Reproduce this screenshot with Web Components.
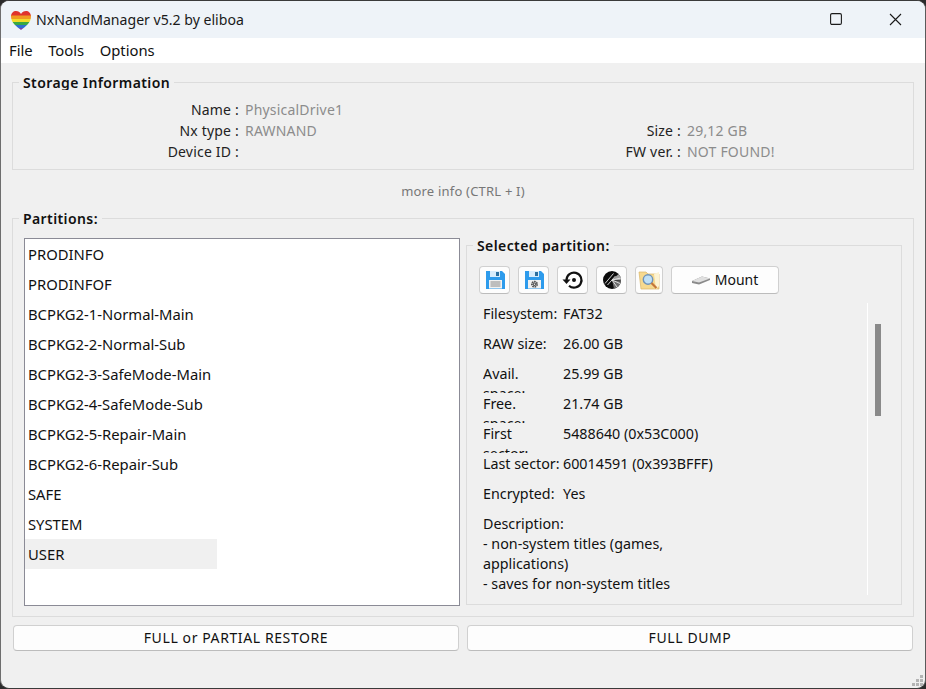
<!DOCTYPE html>
<html>
<head>
<meta charset="utf-8">
<style>
html, body { margin: 0; height: 100%; background: #2b2b2b; overflow: hidden; }
</style>
</head>
<body>
<nx-window></nx-window>

<script>
const FONT = `"Noto Sans", "Open Sans", sans-serif`;

class NxTitlebar extends HTMLElement {
    constructor() {
        super();
        this.attachShadow({ mode: "open" });
        this.shadowRoot.innerHTML = `
<style>
:host { display: flex; height: 37px; background: #eef3f8; align-items: center; color: #1a1a1a; }
.logo { margin-left: 9px; width: 22px; height: 22px; display: block; }
.title { margin-left: 4px; font: 14.1px/20px ${FONT}; }
.btns { margin-left: auto; display: flex; }
.btn { width: 59px; height: 37px; display: flex; align-items: center; justify-content: center; }
</style>
<svg class="logo" viewBox="0 0 22 22">
  <defs><clipPath id="h"><path d="M11 21C7 18 1 14 1 7.500 1 4 3.500 2 6 2c2.200 0 4 1 5 3 1-2 2.800-3 5-3 2.500 0 5 2 5 5.500C21 14 15 18 11 21z"/></clipPath></defs>
  <g clip-path="url(#h)">
    <rect width="22" height="6" y="1" fill="#e0342c"/>
    <rect width="22" height="3.500" y="6.500" fill="#f09a22"/>
    <rect width="22" height="3" y="10" fill="#f2dc2a"/>
    <rect width="22" height="3" y="13" fill="#3aa845"/>
    <rect width="22" height="3" y="16" fill="#2f6fd0"/>
    <rect width="22" height="6" y="19" fill="#7d3fa8"/>
  </g>
</svg>
<span class="title">NxNandManager v5.2 by eliboa</span>
<div class="btns">
  <div class="btn"><svg width="13" height="13" viewBox="0 0 13 13"><rect x="0.600" y="0.600" width="10.800" height="10.800" rx="1.400" fill="none" stroke="#1a1a1a" stroke-width="1.100"/></svg></div>
  <div class="btn"><svg width="13" height="13" viewBox="0 0 13 13"><path d="M1 1l11 11M12 1L1 12" stroke="#1a1a1a" stroke-width="1.100" fill="none"/></svg></div>
</div>`;
    }
}
customElements.define("nx-titlebar", NxTitlebar);

class NxMenubar extends HTMLElement {
    constructor() {
        super();
        this.attachShadow({ mode: "open" });
        this.shadowRoot.innerHTML = `
<style>
:host { display: flex; height: 25px; box-sizing: border-box; padding: 0 0 2px 8px; background: #fff; align-items: center; gap: 15.5px; font: 14.800px/20px ${FONT}; color: #111; }
</style>
<span>File</span><span>Tools</span><span>Options</span>`;
    }
}
customElements.define("nx-menubar", NxMenubar);

class NxGroup extends HTMLElement {
    constructor() {
        super();
        this.attachShadow({ mode: "open" });
        this.shadowRoot.innerHTML = `
<style>
:host { display: block; border: 1px solid #dcdcdc; position: relative; box-sizing: border-box; }
.legend { position: absolute; left: 6px; top: -10px; background: #f0f0f0; padding: 0 4px; height: 17px; overflow: hidden;
  font: 600 14px/20px "Noto Sans", sans-serif; letter-spacing: 0.400px; color: #111; white-space: nowrap; }
</style>
<div class="legend"></div>
<slot></slot>`;
    }
    connectedCallback() {
        this.shadowRoot.querySelector(".legend").textContent = this.getAttribute("label");
    }
}
customElements.define("nx-group", NxGroup);

class NxStorageInfo extends HTMLElement {
    constructor() {
        super();
        this.attachShadow({ mode: "open" });
        this.shadowRoot.innerHTML = `
<style>
:host { display: grid; grid-template-columns: 226px 216px 226px 1fr; grid-auto-rows: 21px; padding-top: 16px; font: 14px/21px "Noto Sans", sans-serif; color: #222; white-space: nowrap; }
.k { text-align: right; letter-spacing: 0.200px; }
.v { padding-left: 6px; color: #8c8c8c; letter-spacing: 0.200px; }
</style>
<div class="k">Name :</div><div class="v" style="grid-column: 2 / 5">PhysicalDrive1</div>
<div class="k">Nx type :</div><div class="v">RAWNAND</div><div class="k">Size :</div><div class="v">29,12 GB</div>
<div class="k">Device ID :</div><div class="v"></div><div class="k">FW ver. :</div><div class="v">NOT FOUND!</div>`;
    }
}
customElements.define("nx-storage-info", NxStorageInfo);

class NxPartitionList extends HTMLElement {
    constructor() {
        super();
        this.attachShadow({ mode: "open" });
        this.shadowRoot.innerHTML = `
<style>
:host { display: block; width: 436px; height: 368px; box-sizing: border-box; border: 1px solid #8b8b96; background: #fff; font: 14.800px/30px ${FONT}; color: #111; flex: none; }
div { height: 30px; padding-left: 3px; width: 189px; white-space: nowrap; }
.sel { background: #f0f0f0; }
</style>
<div>PRODINFO</div>
<div>PRODINFOF</div>
<div>BCPKG2-1-Normal-Main</div>
<div>BCPKG2-2-Normal-Sub</div>
<div>BCPKG2-3-SafeMode-Main</div>
<div>BCPKG2-4-SafeMode-Sub</div>
<div>BCPKG2-5-Repair-Main</div>
<div>BCPKG2-6-Repair-Sub</div>
<div>SAFE</div>
<div>SYSTEM</div>
<div class="sel">USER</div>`;
    }
}
customElements.define("nx-partition-list", NxPartitionList);

class NxToolButton extends HTMLElement {
    constructor() {
        super();
        this.attachShadow({ mode: "open" });
        this.shadowRoot.innerHTML = `
<style>
:host { display: flex; align-items: center; justify-content: center; box-sizing: border-box; height: 28px; background: #fdfdfd; border: 1px solid #d0d0d0; border-bottom-color: #bcbcbc; border-radius: 4px; font: 14px/20px ${FONT}; color: #111; gap: 5px; flex: none; }
</style>
<slot></slot>`;
    }
}
customElements.define("nx-tool-button", NxToolButton);

class NxInfoRow extends HTMLElement {
    constructor() {
        super();
        this.attachShadow({ mode: "open" });
        this.shadowRoot.innerHTML = `
<style>
:host { display: flex; height: 30px; font: 14.300px/20px ${FONT}; color: #111; }
.k { width: 80px; height: 29px; overflow: hidden; flex: none; white-space: pre-line; }
</style>
<div class="k"></div><div><slot></slot></div>`;
    }
    connectedCallback() {
        this.shadowRoot.querySelector(".k").textContent = this.getAttribute("label");
    }
}
customElements.define("nx-info-row", NxInfoRow);

class NxSelectedPartition extends HTMLElement {
    constructor() {
        super();
        this.attachShadow({ mode: "open" });
        this.shadowRoot.innerHTML = `
<style>
:host { display: block; position: relative; height: 100%; }
.tools { display: flex; gap: 8px; padding: 20px 0 0 12px; }
.info { padding: 10px 0 0 16px; }
.desc { width: 225px; font: 14.300px/20px ${FONT}; color: #111; }
.track { position: absolute; left: 400px; top: 57px; bottom: 9px; width: 1px; background: #fff; }
.thumb { position: absolute; left: 408px; top: 78px; width: 6px; height: 92px; background: #8a8a8a; }
svg { display: block; }
</style>
<div class="tools">
  <nx-tool-button style="width:31px">
    <svg width="22" height="22" viewBox="0 0 22 22"><path d="M2 2h16l3 3v15H2z" fill="#2d9bec"/><rect x="6" y="2" width="10" height="6" fill="#d7ecfb"/><rect x="12" y="3" width="3" height="4" fill="#2b6f9f"/><rect x="5" y="11" width="13" height="8.500" fill="#f1f1f1"/><path d="M6.500 13h10M6.500 15h10M6.500 17h10" stroke="#8a8a8a"/></svg>
  </nx-tool-button>
  <nx-tool-button style="width:31px">
    <svg width="22" height="22" viewBox="0 0 22 22"><path d="M2 2h16l3 3v15H2z" fill="#2d9bec"/><rect x="6" y="2" width="10" height="6" fill="#d7ecfb"/><rect x="12" y="3" width="3" height="4" fill="#2b6f9f"/><rect x="5" y="11" width="13" height="8.500" fill="#f1f1f1"/><circle cx="11.500" cy="15.200" r="2.600" fill="none" stroke="#555" stroke-width="1.800" stroke-dasharray="1.600 0.700"/><circle cx="11.500" cy="15.200" r="1.700" fill="#555"/><circle cx="11.500" cy="15.200" r="0.700" fill="#f1f1f1"/></svg>
  </nx-tool-button>
  <nx-tool-button style="width:31px">
    <svg width="22" height="22" viewBox="0 0 22 22"><path d="M4.500 11A7.500 7.500 0 1 1 7 16.700" fill="none" stroke="#111" stroke-width="2.200"/><path d="M0.500 10.500h8L4.500 15z" fill="#111"/><circle cx="12" cy="11" r="2" fill="#111"/></svg>
  </nx-tool-button>
  <nx-tool-button style="width:31px">
    <svg width="22" height="22" viewBox="0 0 22 22"><circle cx="11" cy="11" r="9" fill="#0c0c0c"/><path d="M11 11L17.500 5A9 9 0 0 1 20 11.500z" fill="#a0a0a0"/><path d="M11 11L20 12.500A9 9 0 0 1 13 19.800z" fill="#6e6e6e"/><path d="M4 14.500L12.500 4.500M6.500 16L14.500 7M11 11L20 9M11 11L19 14.500M11 11L16 18" stroke="#e8e8e8" stroke-width="0.900"/></svg>
  </nx-tool-button>
  <nx-tool-button style="width:28px">
    <svg width="23" height="23" viewBox="0 0 23 23"><path d="M1 3h7l2 2h11v15H3z" fill="#f6d98f" stroke="#d9b567" stroke-width="0.700"/><path d="M16 5l5-2v14l-3 3z" fill="#fdf3d2"/><circle cx="10" cy="10.500" r="4.700" fill="#bfe0f7" stroke="#6f93b8" stroke-width="1.400"/><path d="M13.500 14l5 5" stroke="#c4763a" stroke-width="2.200"/></svg>
  </nx-tool-button>
  <nx-tool-button style="width:108px">
    <svg width="18" height="9" viewBox="0 0 18 9"><path d="M0 5l10-4.500 8 2v1.500L7 8.500 0 7z" fill="#8a8a8a"/><path d="M0 5l10-4.500 8 2L7 6.500z" fill="#e0e0e0"/></svg>
    <span>Mount</span>
  </nx-tool-button>
</div>
<div class="info">
  <nx-info-row label="Filesystem:">FAT32</nx-info-row>
  <nx-info-row label="RAW size:">26.00 GB</nx-info-row>
  <nx-info-row label="Avail.&#10;space:">25.99 GB</nx-info-row>
  <nx-info-row label="Free.&#10;space:">21.74 GB</nx-info-row>
  <nx-info-row label="First&#10;sector:">5488640 (0x53C000)</nx-info-row>
  <nx-info-row label="Last sector:">60014591 (0x393BFFF)</nx-info-row>
  <nx-info-row label="Encrypted:">Yes</nx-info-row>
  <div class="desc">Description:<br>- non-system titles (games, applications)<br>- saves for non-system titles</div>
</div>
<div class="track"></div>
<div class="thumb"></div>`;
    }
}
customElements.define("nx-selected-partition", NxSelectedPartition);

class NxWindow extends HTMLElement {
    constructor() {
        super();
        this.attachShadow({ mode: "open" });
        this.shadowRoot.innerHTML = `
<style>
:host { display: flex; flex-direction: column; box-sizing: border-box; width: 926px; height: 689px; border: 1px solid #3a3a3a; border-left-color: #6e6e6e; border-right-color: #5a5a5a; border-radius: 9px; overflow: hidden; background: #f0f0f0; position: relative; }
.body { flex: 1; display: flex; flex-direction: column; padding: 19px 11px 0 11px; }
.storage { height: 88px; flex: none; }
.more { height: 48px; flex: none; text-align: center; font: 13px/42px "Noto Sans", sans-serif; letter-spacing: 0.200px; color: #777; }
.parts { height: 399px; flex: none; }
.row { display: flex; gap: 6px; padding: 19px 0 0 11px; }
.sel { width: 436px; height: 360px; margin-top: 7px; flex: none; }
.actions { display: flex; gap: 8px; padding: 8px 1px 0 1px; }
.actions nx-tool-button { flex: 1; height: 26px; letter-spacing: 0.600px; }
.grip { position: absolute; right: 2px; bottom: 2px; }
</style>
<nx-titlebar></nx-titlebar>
<nx-menubar></nx-menubar>
<div class="body">
  <nx-group class="storage" label="Storage Information"><nx-storage-info></nx-storage-info></nx-group>
  <div class="more">more info (CTRL + I)</div>
  <nx-group class="parts" label="Partitions:">
    <div class="row">
      <nx-partition-list></nx-partition-list>
      <nx-group class="sel" label="Selected partition:"><nx-selected-partition></nx-selected-partition></nx-group>
    </div>
  </nx-group>
  <div class="actions">
    <nx-tool-button>FULL or PARTIAL RESTORE</nx-tool-button>
    <nx-tool-button>FULL DUMP</nx-tool-button>
  </div>
</div>
<svg class="grip" width="11" height="11" viewBox="0 0 11 11" fill="#b4b4b4"><rect x="8" y="0" width="3" height="3"/><rect x="4" y="4" width="3" height="3"/><rect x="8" y="4" width="3" height="3"/><rect x="0" y="8" width="3" height="3"/><rect x="4" y="8" width="3" height="3"/><rect x="8" y="8" width="3" height="3"/></svg>`;
    }
}
customElements.define("nx-window", NxWindow);
</script>
</body>
</html>
